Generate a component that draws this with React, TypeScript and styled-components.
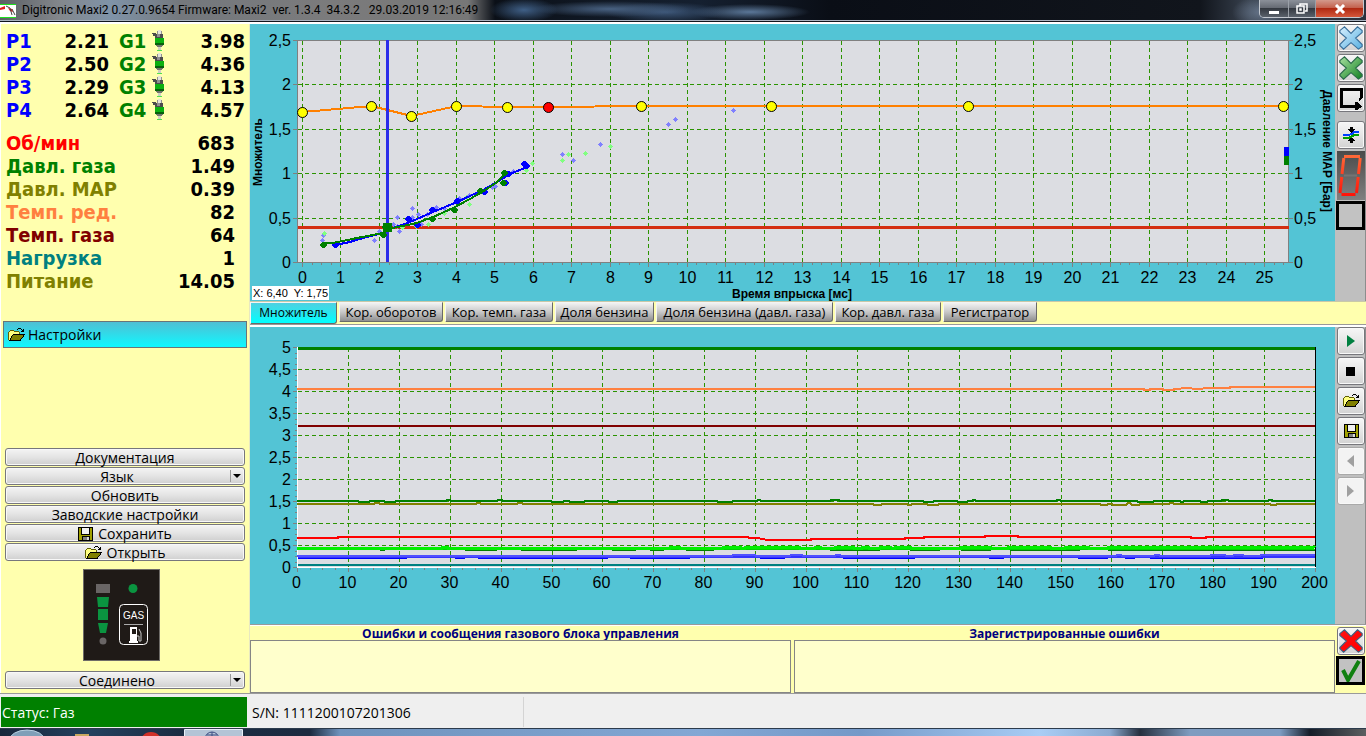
import React from "react";
import styled, { createGlobalStyle } from "styled-components";

const tahoma = '"DejaVu Sans Condensed", "DejaVu Sans", sans-serif';
const segoe = '"Open Sans", "Noto Sans", sans-serif';
const arial = '"Liberation Sans", Arial, sans-serif';

const GlobalStyle = createGlobalStyle`
  * { box-sizing: border-box; }
  body { margin: 0; background: #efefef; font-family: ${segoe}; color: #000; overflow: hidden; }
  button, select { font: inherit; color: inherit; margin: 0; }
`;

/* ---------- window frame ---------- */

const Window = styled.div`
  display: flex;
  flex-direction: column;
`;

const TitleBar = styled.header`
  display: flex;
  align-items: flex-start;
  height: 24px;
  border-bottom: 2px solid #fff;
  box-shadow: inset 0 -1px #11151c, inset 0 -2px #a9b2bf;
  background:
    radial-gradient(ellipse 34px 12px at 524px 10px, #3f5f86, transparent),
    radial-gradient(ellipse 80px 8px at 610px 9px, #486181, transparent),
    radial-gradient(ellipse 60px 10px at 665px 12px, #3c5678, transparent),
    radial-gradient(ellipse 60px 8px at 750px 12px, #5b7798, transparent),
    radial-gradient(ellipse 30px 16px at 1262px 12px, #66758a, transparent),
    linear-gradient(90deg, #5c6065 0, #83878c 60px, #7f93a8 110px, #74787d 180px, #7b7b7c 330px, #777 468px, #0b1018 495px, #152030 700px, #0a0e16 830px, #11151c 1200px, #39424f 1250px, #2a313b 100%);
`;

const AppIcon = styled.svg`
  width: 16px;
  height: 14px;
  margin-top: 4px;
`;

const Title = styled.h1`
  flex: 1;
  margin: 0 0 0 6px;
  font: 400 12px/21px Roboto, ${segoe};
  white-space: pre;
`;

const WindowButtons = styled.div`
  display: flex;
  height: 18px;
  margin-right: 2px;
  border: 1px solid #c3c8cf;
  border-top: 0;
  border-radius: 0 0 5px 5px;
  overflow: hidden;
`;

const WindowButton = styled.button<{ $width: number; $close?: boolean }>`
  display: grid;
  place-items: center;
  width: ${(p) => p.$width}px;
  padding: 0;
  border: 0;
  border-left: 1px solid #9aa0a8;
  background: ${(p) =>
    p.$close
      ? "linear-gradient(#d39a8c, #c4624e 45%, #b02a12 50%, #d4573a)"
      : "linear-gradient(#8b9099, #666b74 45%, #343941 50%, #5a616b)"};
  &:first-child { border-left: 0; }
`;

const Workspace = styled.div`
  display: grid;
  grid-template-columns: 249px minmax(0, 1fr);
  background: #ffffae;
  border-bottom: 1px solid #9a9a9a;
`;

/* ---------- left panel ---------- */

const Sidebar = styled.aside`
  display: flex;
  flex-direction: column;
  padding: 6px 2px 4px 3px;
  border-left: 1px solid #fff;
`;

const InjectorTable = styled.table`
  border-collapse: collapse;
  table-layout: fixed;
  width: 239px;
  margin-left: 2px;
  font: 700 20px/23px ${tahoma};
`;

const Label = styled.th<{ $color: string }>`
  padding: 0;
  height: 23px;
  text-align: left;
  white-space: nowrap;
  color: ${(p) => p.$color};
`;

const Value = styled.td`
  padding: 0;
  height: 23px;
  text-align: right;
`;

const IconCell = styled.td`
  padding: 0;
  line-height: 0;
`;

const SensorTable = styled(InjectorTable)`
  width: 229px;
  margin-top: 10px;
`;

const SettingsButton = styled.button`
  display: flex;
  align-items: center;
  gap: 3px;
  height: 27px;
  margin: 28px 0 0 -1px;
  padding: 0 4px;
  border: 1px solid #6a7478;
  background: linear-gradient(#50bfd4, #0ff8ff);
  font-size: 14px;
  text-align: left;
`;

const ActionList = styled.div`
  display: flex;
  flex-direction: column;
  gap: 1px;
  margin: 100px 0 0 1px;
  width: 240px;
`;

const face = `
  width: 100%;
  height: 18px;
  padding: 0;
  border: 1px solid #77777c;
  border-radius: 3px;
  background: linear-gradient(#f4f4f4, #e4e4e4 50%, #cfcfcf);
  box-shadow: inset 0 0 0 1px #f8f8f8;
  font-size: 14px;
  line-height: 18px;
`;

const ActionButton = styled.button`
  ${face}
  display: flex;
  align-items: center;
  justify-content: center;
  gap: 5px;
  padding-top: 2px;
`;

const SelectFrame = styled.div`
  position: relative;
  height: 18px;
  &::before {
    content: "";
    position: absolute;
    right: 14px;
    top: 3px;
    height: 12px;
    border-left: 1px solid #9a9a9a;
  }
  &::after {
    content: "";
    position: absolute;
    right: 4px;
    top: 7px;
    border: 4px solid transparent;
    border-top: 4px solid #000;
    border-bottom: 0;
  }
`;

const ActionSelect = styled.select`
  ${face}
  display: block;
  appearance: none;
  padding-right: 16px;
  text-align: center;
  text-align-last: center;
`;

const SwitchPanel = styled.svg`
  width: 77px;
  height: 92px;
  margin: 8px 0 10px 79px;
`;

const Connection = styled.div`
  width: 240px;
  margin-left: 1px;
`;

/* ---------- charts ---------- */

const Main = styled.main`
  min-width: 0;
  border-left: 1px solid #e8e8c0;
`;

const ChartRow = styled.section`
  display: grid;
  grid-template-columns: minmax(0, 1fr) 31px;
`;

const ChartArea = styled.div`
  position: relative;
  background: #53c4d5;
`;

const ChartSvg = styled.svg`
  display: block;
  width: 100%;
  height: auto;
  font-family: ${arial};
`;

const CursorReadout = styled.output`
  position: absolute;
  left: 2px;
  bottom: 1px;
  padding: 0 1px;
  background: #fff;
  font: 11px/14px ${arial};
  white-space: pre;
`;

const ToolColumn = styled.div`
  display: flex;
  flex-direction: column;
  gap: 2px;
  padding: 0 1px 0 2px;
  background: #bfbfbf;
  border-right: 1px solid #8d8d8d;
`;

const ToolButton = styled.button<{ $spaced?: boolean }>`
  display: grid;
  place-items: center;
  width: 28px;
  height: 28px;
  margin-top: ${(p) => (p.$spaced ? 7 : 0)}px;
  padding: 0;
  border: 1px solid #77777c;
  border-radius: 3px;
  background: linear-gradient(#f6f6f6, #e6e6e6 50%, #d2d2d2);
  box-shadow: inset 0 0 0 1px #f8f8f8;
  &:disabled {
    border-color: #a9a9a9;
    background: #f3f3f3;
  }
`;

const DigitDisplay = styled.svg`
  width: 28px;
  height: 49px;
`;

const StateBox = styled.div`
  display: grid;
  place-items: center;
  width: 29px;
  height: 29px;
  margin: -1px 0 0 -1px;
  border: 3px solid #000;
  background: #c2c2c2;
`;

const TabBar = styled.div`
  display: flex;
  gap: 2px;
  height: 26px;
  padding-bottom: 3px;
  border-top: 1px solid #c9c9a8;
  border-bottom: 2px solid #fff;
  box-shadow: inset 0 -1px #9a9a9a;
`;

const Tab = styled.button<{ $width: number; $active?: boolean }>`
  width: ${(p) => p.$width}px;
  height: ${(p) => (p.$active ? 22 : 20)}px;
  padding: 0;
  border: 1px solid;
  border-color: #f4f4f4 #6a6a6a #6a6a6a #f4f4f4;
  border-radius: 0 0 3px 0;
  background: ${(p) =>
    p.$active ? "linear-gradient(#4fd0e0, #00ffff)" : "linear-gradient(#f2f2f2, #c8c8c8 50%, #8f8f8f)"};
  font-size: ${(p) => (p.$active ? 12 : 13)}px;
  line-height: 18px;
  white-space: nowrap;
`;

/* ---------- bottom ---------- */

const Messages = styled.section`
  display: flex;
  height: 69px;
  border-top: 1px solid #9a9a9a;
  box-shadow: inset 0 1px #fff;
`;

const MessageGroups = styled.div`
  flex: 1;
  display: grid;
  grid-template-columns: 1fr 1fr;
  gap: 3px;
`;

const MessageGroup = styled.div`
  display: flex;
  flex-direction: column;
`;

const MessageTitle = styled.h2`
  margin: 0;
  padding-top: 2px;
  font: 700 12px/13px ${segoe};
  text-align: center;
  color: #000080;
`;

const MessageBox = styled.div`
  flex: 1;
  border: 1px solid #858585;
  background: #ffffcc;
`;

const MessageTools = styled.div`
  display: flex;
  flex-direction: column;
  gap: 2px;
  width: 31px;
  padding: 2px 0 0 2px;
`;

const StatusBar = styled.footer`
  display: flex;
  height: 35px;
  padding: 3px 0 1px 1px;
  background: #efefef;
  border-bottom: 1px solid #2c3b4c;
  font-size: 14px;
  line-height: 31px;
`;

const StatusCell = styled.div`
  width: 246px;
  padding-left: 1px;
  background: #008000;
  color: #fff;
`;

const SerialCell = styled.div`
  width: 277px;
  padding-left: 5px;
  border-right: 1px solid #d4d4d4;
`;

const Taskbar = styled.div`
  height: 8px;
  background: linear-gradient(90deg, #17273b 0, #24415f 90px, #1a2c42 180px, #1c2b40 310px, #6f93bd 340px, #83a7d4 700px, #7599c8 860px, #a9cdf5 1040px, #8aaad0 1110px, #26303f 1140px, #7f9cc0 1190px, #7d9cc2 1280px, #151c28 1310px, #5b5f60 100%);
`;

const TaskbarItems = styled.svg`
  display: block;
  width: 260px;
  height: 8px;
`;

/* ---------- icons ---------- */

const FolderIcon = () => (
  <svg width="17" height="14" viewBox="0 0 17 14" shapeRendering="crispEdges" aria-hidden="true">
    <path d="M1 12V4h1V3h4v1h5v3H6L2 12z" fill="#ffff80" />
    <path d="M0 4h1v8H0zM1 3h1v1H1zM2 2h4v1H2zM6 3h5v1H6zM11 4h1v3h-1z" fill="#606000" />
    <path d="M2 12L5 7H16L12 12z" fill="#808000" />
    <path d="M5 6h12v1H5zM4 7h1v1H4zM3 8h1v2H3zM2 10h1v2H2zM1 12h12v1H1zM12 11h1v1h-1zM13 10h1v1h-1zM14 9h1v1h-1zM15 7h1v2h-1z" fill="#000" />
    <path d="M9 1h1v1H9zM10 0h3v1h-3zM13 1h1v1h-1zM14 2h1v1h-1zM15 1h1v3h-1zM13 3h2v1h-2z" fill="#000" />
  </svg>
);

const FloppyIcon = () => (
  <svg width="15" height="14" viewBox="0 0 15 14" shapeRendering="crispEdges" aria-hidden="true">
    <rect width="15" height="14" fill="#000" />
    <rect x="1" y="1" width="13" height="12" fill="#a0a000" />
    <rect x="3" y="0" width="9" height="8" fill="#000" />
    <rect x="4" y="1" width="7" height="6" fill="#f0f0f0" />
    <rect x="4" y="9" width="8" height="5" fill="#000" />
    <rect x="5" y="10" width="4" height="3" fill="#808080" />
    <rect x="9" y="10" width="2" height="3" fill="#d8d8d8" />
  </svg>
);

const InjectorIcon = () => (
  <svg width="14" height="23" viewBox="0 0 14 23" shapeRendering="crispEdges" aria-hidden="true">
    <rect x="6" y="0" width="3" height="5" fill="#e4e4dc" />
    <path d="M5 1h1v3H5zM9 1h1v3H9z" fill="#909090" />
    <path d="M0 3h4v1h7v4h1v1H3V6H1V4H0z" fill="#4c4c4c" />
    <path d="M5 4h3v3H5z" fill="#909090" />
    <rect x="3" y="8" width="9" height="7" fill="#06600c" />
    <rect x="3" y="8" width="9" height="5" fill="#0cb010" />
    <path d="M4 15h7v1H4zM5 16h5v1H5z" fill="#74746c" />
    <path d="M6 17h3v3H6z" fill="#d0d0c4" />
    <path d="M5 20h5v1H5z" fill="#50e050" />
  </svg>
);

const CrossIcon = ({ id, from, to, edge }: { id: string; from: string; to: string; edge: string }) => (
  <svg width="26" height="26" viewBox="0 0 28 28" aria-hidden="true">
    <defs>
      <linearGradient id={id} x1="0" y1="0" x2="1" y2="1">
        <stop offset="0" stopColor={from} />
        <stop offset="1" stopColor={to} />
      </linearGradient>
    </defs>
    <path
      d="M2 6L7 2L14 9L21 2L26 6V8L19 14L26 21V23L22 26L14 19L6 26L2 22V21L9 14L2 8Z"
      fill={`url(#${id})`}
      stroke={edge}
      strokeWidth="1.200"
    />
  </svg>
);

const LoopIcon = () => (
  <svg width="24" height="24" viewBox="0 0 24 24" shapeRendering="crispEdges" aria-hidden="true">
    <path d="M22 12V3H2V20H17" fill="none" stroke="#000" strokeWidth="3" />
    <path d="M16 16h2l5 4.500l-5 3.500h-2zM20 12h3v1l-3 2z" fill="#000" />
  </svg>
);

const MergeIcon = () => (
  <svg width="18" height="18" viewBox="0 0 18 18" shapeRendering="crispEdges" aria-hidden="true">
    <path d="M8 1h3v2h2L9.500 7L6 3h2zM8 17h3v-2h2L9.500 11L6 15h2z" fill="#000" />
    <path d="M1 9h5l4-1l2-2h5" fill="none" stroke="#0040ff" strokeWidth="2" />
    <path d="M1 12h5l3-1l3-2h5" fill="none" stroke="#00a000" strokeWidth="2" />
  </svg>
);

const ShapeIcon = ({ d, color }: { d: string; color: string }) => (
  <svg width="16" height="16" viewBox="0 0 16 16" aria-hidden="true">
    <path d={d} fill={color} />
  </svg>
);

const SevenSegment = () => (
  <DigitDisplay viewBox="0 0 28 49" role="img" aria-label="0">
    <defs>
      <linearGradient id="panel" x1="0" y1="0" x2="0" y2="1">
        <stop offset="0" stopColor="#4a4a4a" />
        <stop offset="1" stopColor="#808080" />
      </linearGradient>
      <linearGradient id="led" gradientUnits="userSpaceOnUse" x1="0" y1="4" x2="0" y2="44">
        <stop offset="0" stopColor="#ff6a38" />
        <stop offset="1" stopColor="#ff1408" />
      </linearGradient>
    </defs>
    <rect width="28" height="49" fill="url(#panel)" />
    <path
      d="M7 5.500L23 5.600M6.800 7L5 23M23.200 7L21.500 23M4.800 26L3 42M21.200 26L19.500 42M4.500 43.500L18.500 43.400"
      fill="none"
      stroke="url(#led)"
      strokeWidth="3"
    />
    <path d="M7 24.500h13" stroke="#747474" strokeWidth="2" />
  </DigitDisplay>
);

const GasSwitch = () => (
  <SwitchPanel viewBox="0 0 77 92" role="img" aria-label="GAS">
    <rect x="0.500" y="0.500" width="76" height="91" fill="#1f1a17" stroke="#6f6c68" />
    <rect x="13" y="15" width="14" height="9" fill="#696565" />
    <path d="M14 28h12l-1 10H15zM15 40h10v11H15zM15 54h10l-2 10h-6z" fill="#0a9440" />
    <circle cx="20" cy="72" r="3.500" fill="#696565" />
    <circle cx="50" cy="19.500" r="4.500" fill="#0a9440" />
    <rect x="36.500" y="35.500" width="28" height="40" rx="4" fill="none" stroke="#fff" />
    <text x="50.500" y="50" textAnchor="middle" fontSize="10" fill="#fff" fontFamily="Liberation Sans, sans-serif">
      GAS
    </text>
    <path d="M41 55.500h19" stroke="#aaa" />
    <path fillRule="evenodd" d="M47 58h7v14h1v2h-9v-2h1zM49 60v5h4v-5z" fill="#fff" />
    <path d="M54 67h2v5h2v-8l-2-4" fill="none" stroke="#ccc" />
  </SwitchPanel>
);

/* ---------- multiplier chart ---------- */

const comma = (n: number) => String(n).replace(".", ",");
const range = (count: number) => Array.from({ length: count }, (_, i) => i);

const GRID = "#2a9300";
const PLOT = "#dcdde2";

const mx = (v: number) => Math.round(52 + v * 38.48) + 0.5;
const my = (v: number) => Math.round(238 - v * 88.8) + 0.5;

const multiplier: [number, number][] = [
  [0, 1.69], [1.8, 1.76], [2.82, 1.645], [4, 1.755], [5.34, 1.745],
  [6.4, 1.745], [8.8, 1.755], [12.2, 1.755], [17.3, 1.755], [25.5, 1.755],
];

const petrolCurve = "85,221 100,218 113,214 133,209 143,204 160,198 183,188 207,178 233,166 247,158 260,150 277,143";
const gasCurve = "73,219 83,219 107,214 133,209 143,204 167,199 183,193 203,184 220,175 237,165 247,158 255,150";
const petrolDots = [[85, 220], [158, 194], [182, 185], [207, 176], [258, 149], [255, 158], [274, 139], [276, 141], [234, 167], [167, 200]];
const gasDots = [[73, 220], [133, 210], [182, 194], [204, 185], [230, 166], [253, 158], [254, 148], [135, 202]];
const petrolHistory = [
  [73, 211], [72, 216], [124, 216], [129, 207], [147, 193], [143, 200], [147, 202], [149, 207], [162, 184], [162, 193],
  [168, 190], [171, 200], [177, 190], [186, 183], [194, 184], [209, 174], [219, 171], [245, 162], [242, 163], [263, 147],
  [312, 130], [323, 136], [350, 120], [418, 100], [425, 95], [483, 86],
];
const gasHistory = [
  [74, 209], [178, 200], [194, 189], [216, 173], [219, 180], [276, 146], [282, 139], [312, 136], [318, 130], [335, 129],
  [360, 122], [166, 202], [152, 203],
];

const SMALL_DOT = "h1v-1h1v-1h1v1h1v1h1v1h-1v1h-1v1h-1v-1h-1v-1h-1z";
const LARGE_DOT = "h1v-1h1v-1h3v1h1v1h1v2h-1v1h-1v1h-3v-1h-1v-1h-1z";

const Dots = ({ points, shape, color }: { points: number[][]; shape: string; color: string }) => (
  <path fill={color} d={points.map(([x, y]) => `M${x - (shape === LARGE_DOT ? 3 : 2)} ${y}${shape}`).join("")} />
);

const MultiplierChart = () => (
  <ChartSvg viewBox="0 0 1085 277" role="img" aria-label="Множитель">
    <g shapeRendering="crispEdges">
      <rect x="47" y="16" width="991" height="222" fill={PLOT} />
      <path
        fill="none"
        stroke={GRID}
        strokeDasharray="4 3"
        d={
          range(26).map((i) => `M${mx(i)} 17V238`).join("") +
          range(4).map((i) => `M48 ${my((i + 1) / 2)}H1038`).join("")
        }
      />
      <path d="M47.500 16.500H1038.500V238.500H47.500z" fill="none" stroke="#808080" />
      <path
        fill="none"
        stroke="#808080"
        d={
          range(103).map((i) => `M${mx(i / 4)} 239v${i % 4 ? 2 : 4}`).join("") +
          range(6).map((i) => `M43 ${my(i / 2)}h4M1039 ${my(i / 2)}h4`).join("")
        }
      />
      <path d="M48 203.500H1039" stroke="#d42e12" strokeWidth="3" />
      <polyline
        points={multiplier.map(([x, y]) => `${mx(x)},${my(y) - 0.5}`).join(" ")}
        fill="none"
        stroke="#ff8000"
        strokeWidth="2"
      />
      <path d="M137.500 15.500V238" stroke="#2b2bea" strokeWidth="3" />
      <Dots points={petrolHistory} shape={SMALL_DOT} color="#8080ff" />
      <Dots points={gasHistory} shape={SMALL_DOT} color="#80ff80" />
      <Dots points={petrolDots} shape={LARGE_DOT} color="#0000ff" />
      <polyline points={petrolCurve} fill="none" stroke="#0000ff" strokeWidth="2" />
      <polyline points={gasCurve} fill="none" stroke="#008000" strokeWidth="2" />
      <Dots points={gasDots} shape={LARGE_DOT} color="#008000" />
      <rect x="133" y="199" width="9" height="9" fill="#008000" />
      <rect x="1034" y="123" width="5" height="9" fill="#0000ff" />
      <rect x="1034" y="132" width="5" height="9" fill="#008000" />
    </g>
    {multiplier.map(([x, y]) => (
      <circle key={x} cx={mx(x)} cy={my(y)} r="5" fill={x === 6.4 ? "#ff0000" : "#ffff00"} stroke="#000" />
    ))}
    <g fontSize="16">
      {range(26).map((i) => (
        <text key={i} x={mx(i)} y="259" textAnchor="middle">{i}</text>
      ))}
      {range(6).map((i) => (
        <React.Fragment key={i}>
          <text x="41" y={my(i / 2) + 5} textAnchor="end">{comma(i / 2)}</text>
          <text x="1044" y={my(i / 2) + 5}>{comma(i / 2)}</text>
        </React.Fragment>
      ))}
    </g>
    <g fontSize="12" fontWeight="700" textAnchor="middle">
      <text x="542" y="274">Время впрыска [мс]</text>
      <text transform="translate(12 128) rotate(-90)">Множитель</text>
      <text transform="translate(1073 127) rotate(90)">Давление МАР [Бар]</text>
    </g>
  </ChartSvg>
);

/* ---------- recorder chart ---------- */

const rx = (v: number) => Math.round(47 + v * 5.09) + 0.5;
const ry = (v: number) => Math.round(240 - v * 44) + 0.5;

// A flat trace with short one-pixel excursions: [from, to, offset].
const trace = (base: number, bumps: [number, number, number][]) =>
  `M47 ${base}` + bumps.map(([a, b, d]) => `H${a}l1 ${d}H${b}l1 ${-d}`).join("") + "H1065";

const gasPressure = trace(174, [
  [108, 119, 1], [134, 145, 1], [196, 200, -1], [247, 252, -1], [301, 313, 1], [319, 334, 1], [358, 367, 1], [467, 482, 1],
  [507, 510, -1], [580, 589, -1], [673, 683, 1], [707, 717, 1], [722, 725, -1], [806, 810, -1], [887, 903, 1], [930, 933, 1],
  [950, 957, 1], [971, 978, -1], [1018, 1022, -1],
]);
const mapPressure = trace(177, [
  [124, 129, -1], [226, 230, -1], [267, 272, -1], [623, 631, 1], [657, 661, 1], [677, 688, 1], [850, 857, 1], [862, 876, 1],
  [877, 880, -1], [881, 889, 1], [919, 923, -1], [1020, 1026, 1],
]);
const gasPulse = trace(221, [
  [192, 197, -1], [420, 429, -1], [473, 490, -1], [495, 549, -1], [565, 570, -1], [585, 603, -1], [612, 618, -1],
  [630, 640, -1], [645, 660, -1], [711, 740, -1], [758, 800, -1], [815, 838, -1], [858, 1064, -1],
]);
const petrolPulse = trace(229, [
  [482, 505, -1], [540, 552, -1], [585, 590, -1], [866, 871, -1], [904, 909, -1], [960, 975, -1], [983, 993, -1], [1010, 1064, -1],
]);
const reducerTemp = "M47 62H894v1h6v-1h13v1h11v-1h4l6 -1h6l4 1h6l6 -1H980V60H1065";
const rpm = "M47 211H88V210H498l1 1h9l9 2H561V212H655V211H674V210H735V209H768V210H941V211H956V210H1065";

const RecorderChart = () => (
  <ChartSvg viewBox="0 0 1085 297" role="img" aria-label="Регистратор">
    <g shapeRendering="crispEdges">
      <rect x="47" y="20" width="1019" height="220" fill={PLOT} />
      <path
        fill="none"
        stroke={GRID}
        strokeDasharray="4 3"
        d={
          range(19).map((i) => `M${rx((i + 1) * 10)} 21V240`).join("") +
          range(9).map((i) => `M48 ${ry((i + 1) / 2)}H1065`).join("")
        }
      />
      <path
        fill="none"
        stroke="#808080"
        d={
          range(81).map((i) => `M${rx(i * 2.5)} 241v${i % 4 ? 2 : 4}`).join("") +
          range(41).map((i) => `M47 ${ry(i / 8)}h${i % 4 ? -2 : -4}`).join("")
        }
      />
      <path d="M47.500 20V240.500H1066" fill="none" stroke="#fff" />
      <path d="M1065.500 20V240" stroke="#000" />
      <g fill="none" strokeWidth="2">
        <path d="M48 21.500H1065" stroke="#008000" strokeWidth="3" />
        <path d={reducerTemp} stroke="#ff8040" />
        <path d="M48 99H1065" stroke="#800000" />
        <path d={mapPressure} stroke="#808000" />
        <path d={gasPressure} stroke="#008000" />
        <path d={rpm} stroke="#ff0000" />
        <path
          d="M130 223h5M215 223h32M271 223h56M362 223h24M400 223h14M436 223h28M580 223h50M660 223h30M711 223h30M760 223h70M858 223h207"
          stroke="#008000"
        />
        <path d="M48 222.500H1065" stroke="#00d400" strokeWidth="1" />
        <path d={gasPulse} stroke="#00f000" strokeWidth="3" />
        <path d="M48 231.500H157M205 231.500h10M228 231.500h130M380 231.500h60M510 231.500h25M593 231.500h72M739 231.500h15M828 231.500h30M875 231.500h10M900 231.500h113" stroke="#0000ff" strokeWidth="1" />
        <path d="M48 230H1065" stroke="#3434ff" />
        <path d={petrolPulse} stroke="#5050ff" />
        <path d="M48 238H1065" stroke="#008080" />
      </g>
    </g>
    <g fontSize="16">
      {range(21).map((i) => (
        <text key={i} x={rx(i * 10) - 1} y="261" textAnchor="middle">{i * 10}</text>
      ))}
      {range(11).map((i) => (
        <text key={i} x="41" y={ry(i / 2) + 5} textAnchor="end">{comma(i / 2)}</text>
      ))}
    </g>
  </ChartSvg>
);

/* ---------- data ---------- */

const injectors = [
  ["2.21", "3.98"],
  ["2.50", "4.36"],
  ["2.29", "4.13"],
  ["2.64", "4.57"],
];

const sensors = [
  ["Об/мин", "683", "#ff0000"],
  ["Давл. газа", "1.49", "#008000"],
  ["Давл. MAP", "0.39", "#808000"],
  ["Темп. ред.", "82", "#ff8040"],
  ["Темп. газа", "64", "#800000"],
  ["Нагрузка", "1", "#008080"],
  ["Питание", "14.05", "#808000"],
];

const tabs: [string, number][] = [
  ["Множитель", 87],
  ["Кор. оборотов", 104],
  ["Кор. темп. газа", 108],
  ["Доля бензина", 99],
  ["Доля бензина (давл. газа)", 177],
  ["Кор. давл. газа", 106],
  ["Регистратор", 94],
];

export default function App() {
  return (
    <Window>
      <GlobalStyle />
      <TitleBar>
        <AppIcon viewBox="0 0 16 14" aria-hidden="true">
          <rect width="16" height="14" fill="#fff" />
          <path d="M0 0.500H16M0 13.500H16" stroke="#20e020" />
          <path d="M0 4l5-2v3L0 6zM8 4l4 1l1 3l-3-1z" fill="#e02020" />
          <path d="M6 2l4 2l2 7M12 5l3 6" fill="none" stroke="#444" />
        </AppIcon>
        <Title>{"Digitronic Maxi2 0.27.0.9654 Firmware: Maxi2  ver. 1.3.4  34.3.2   29.03.2019 12:16:49"}</Title>
        <WindowButtons>
          <WindowButton $width={28} aria-label="Свернуть">
            <svg width="12" height="10"><path d="M1 7h10v3H1z" fill="#fff" /></svg>
          </WindowButton>
          <WindowButton $width={27} aria-label="Восстановить">
            <svg width="12" height="11"><path d="M4 3V1h7v7H9M1 3h7v7H1zM4 6h1v1H4z" fill="none" stroke="#fff" strokeWidth="1.500" /></svg>
          </WindowButton>
          <WindowButton $width={48} $close aria-label="Закрыть">
            <svg width="12" height="10"><path d="M2 1l8 8M10 1l-8 8" stroke="#fff" strokeWidth="3" /></svg>
          </WindowButton>
        </WindowButtons>
      </TitleBar>

      <Workspace>
        <Sidebar>
          <InjectorTable>
            <colgroup>
              <col width="40" />
              <col width="63" />
              <col width="10" />
              <col width="33" />
              <col width="20" />
              <col />
            </colgroup>
            <tbody>
              {injectors.map(([petrol, gas], i) => (
                <tr key={i}>
                  <Label scope="row" $color="#0000ff">P{i + 1}</Label>
                  <Value>{petrol}</Value>
                  <td />
                  <Label scope="row" $color="#008000">G{i + 1}</Label>
                  <IconCell><InjectorIcon /></IconCell>
                  <Value>{gas}</Value>
                </tr>
              ))}
            </tbody>
          </InjectorTable>

          <SensorTable>
            <tbody>
              {sensors.map(([name, value, color]) => (
                <tr key={name}>
                  <Label scope="row" $color={color}>{name}</Label>
                  <Value>{value}</Value>
                </tr>
              ))}
            </tbody>
          </SensorTable>

          <SettingsButton><FolderIcon />Настройки</SettingsButton>

          <ActionList>
            <ActionButton>Документация</ActionButton>
            <SelectFrame>
              <ActionSelect aria-label="Язык"><option>Язык</option></ActionSelect>
            </SelectFrame>
            <ActionButton>Обновить</ActionButton>
            <ActionButton>Заводские настройки</ActionButton>
            <ActionButton><FloppyIcon />Сохранить</ActionButton>
            <ActionButton><FolderIcon />Открыть</ActionButton>
          </ActionList>

          <GasSwitch />

          <Connection>
            <SelectFrame>
              <ActionSelect aria-label="Соединение"><option>Соединено</option></ActionSelect>
            </SelectFrame>
          </Connection>
        </Sidebar>

        <Main>
          <ChartRow>
            <ChartArea>
              <MultiplierChart />
              <CursorReadout>{"X: 6,40  Y: 1,75"}</CursorReadout>
            </ChartArea>
            <ToolColumn>
              <ToolButton aria-label="Очистить точки бензина"><CrossIcon id="xb" from="#d8f0ff" to="#58b0e0" edge="#3a6f9a" /></ToolButton>
              <ToolButton aria-label="Очистить точки газа"><CrossIcon id="xg" from="#a8e0a0" to="#108020" edge="#2a6a4a" /></ToolButton>
              <ToolButton aria-label="Повтор"><LoopIcon /></ToolButton>
              <ToolButton $spaced aria-label="Совместить кривые"><MergeIcon /></ToolButton>
              <SevenSegment />
              <StateBox />
            </ToolColumn>
          </ChartRow>

          <TabBar role="tablist">
            {tabs.map(([name, width], i) => (
              <Tab key={name} role="tab" aria-selected={i === 0} $width={width} $active={i === 0}>{name}</Tab>
            ))}
          </TabBar>

          <ChartRow>
            <ChartArea><RecorderChart /></ChartArea>
            <ToolColumn>
              <ToolButton aria-label="Пуск"><ShapeIcon d="M4 2v12l8-6z" color="#008040" /></ToolButton>
              <ToolButton aria-label="Стоп"><ShapeIcon d="M3 4h9v9H3z" color="#000" /></ToolButton>
              <ToolButton aria-label="Открыть запись"><FolderIcon /></ToolButton>
              <ToolButton aria-label="Сохранить запись"><FloppyIcon /></ToolButton>
              <ToolButton disabled aria-label="Назад"><ShapeIcon d="M11 2v12L4 8z" color="#a0a0a0" /></ToolButton>
              <ToolButton disabled aria-label="Вперёд"><ShapeIcon d="M4 2v12l7-6z" color="#a0a0a0" /></ToolButton>
            </ToolColumn>
          </ChartRow>

          <Messages>
            <MessageGroups>
              <MessageGroup>
                <MessageTitle>Ошибки и сообщения газового блока управления</MessageTitle>
                <MessageBox />
              </MessageGroup>
              <MessageGroup>
                <MessageTitle>Зарегистрированные ошибки</MessageTitle>
                <MessageBox />
              </MessageGroup>
            </MessageGroups>
            <MessageTools>
              <ToolButton aria-label="Удалить ошибки"><CrossIcon id="xr" from="#ff1010" to="#ff0000" edge="#3a6080" /></ToolButton>
              <StateBox>
                <svg width="22" height="22" viewBox="0 0 22 22" aria-hidden="true">
                  <path d="M3 10l5 10L19 1" fill="none" stroke="#108010" strokeWidth="4" />
                </svg>
              </StateBox>
            </MessageTools>
          </Messages>
        </Main>
      </Workspace>

      <StatusBar>
        <StatusCell>Статус: Газ</StatusCell>
        <SerialCell>S/N: 1111200107201306</SerialCell>
      </StatusBar>
      <Taskbar>
        <TaskbarItems viewBox="0 0 260 8" aria-hidden="true">
          <ellipse cx="27" cy="12" rx="18" ry="11" fill="#7f9fb8" stroke="#b8d0e0" />
          <rect x="75" y="5" width="14" height="3" fill="#c8a860" />
          <circle cx="151" cy="14" r="11" fill="#d03028" />
          <path d="M184.500 8V0.500H242.500V8" fill="#b4c4d6" stroke="#e8f0f8" />
          <circle cx="212" cy="10" r="7" fill="none" stroke="#3a4a80" />
          <path d="M212 3v5M207 6h10" stroke="#3a4a80" />
        </TaskbarItems>
      </Taskbar>
    </Window>
  );
}
